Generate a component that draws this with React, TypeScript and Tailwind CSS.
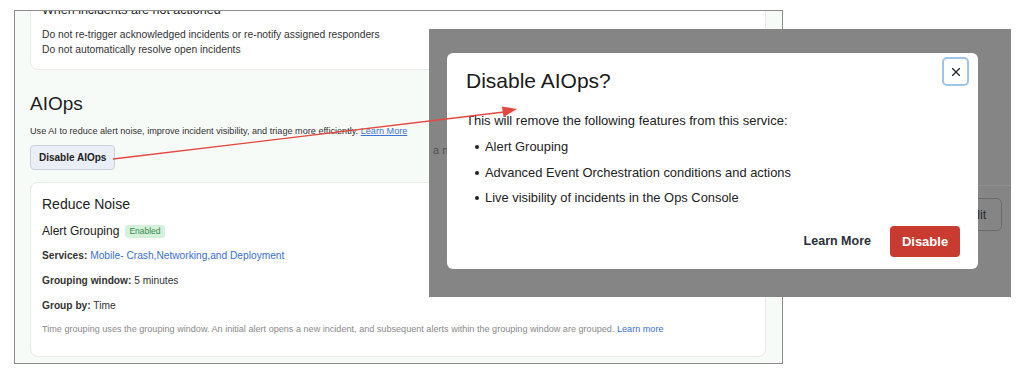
import { X } from 'lucide-react';

const FONT = { fontFamily: '"Liberation Sans", Arial, sans-serif' };

function BackgroundPage() {
  return (
    <div className="ml-[14px] mt-[9px] w-[769px] h-[354px] border-[1.5px] border-[#8c8c8c] bg-[#f7fbf8] overflow-hidden pl-[15px] pr-[16px]">
      <div className="-mt-[24px] bg-white border border-[#e6ebe7] rounded-lg pl-[11px] pt-[14px] pb-[12px]">
        <div className="text-[12.5px] leading-[16px] text-[#222]">When incidents are not actioned</div>
        <div className="mt-[9px] text-[10.3px] leading-[15px] text-[#333]">
          <div>Do not re-trigger acknowledged incidents or re-notify assigned responders</div>
          <div>Do not automatically resolve open incidents</div>
        </div>
      </div>

      <h2 className="mt-[22px] text-[19px] leading-[24px] text-[#1d1d1d]">AIOps</h2>
      <p className="mt-[9px] text-[9.15px] leading-[12px] text-[#333]">
        Use AI to reduce alert noise, improve incident visibility, and triage more efficiently.{' '}
        <span className="text-[#3f73d6] underline">Learn More</span>
      </p>
      <button className="mt-[8px] h-[25px] px-[8px] rounded-[4px] border border-[#c9d1dc] bg-[#eaeef6] text-[10px] font-bold text-[#222]">
        Disable AIOps
      </button>

      <div className="mt-[12px] bg-white border border-[#e6ebe7] rounded-lg pl-[11px] pt-[11px] h-[175px]">
        <div className="text-[14px] leading-[20px] text-[#222]">Reduce Noise</div>
        <div className="mt-[9px] flex items-center gap-[6px]">
          <span className="text-[12px] leading-[16px] text-[#222]">Alert Grouping</span>
          <span className="px-[4px] h-[13px] leading-[13px] rounded-[3px] bg-[#d4f1da] text-[#3b8750] text-[8.5px]">Enabled</span>
        </div>
        <div className="mt-[9px] text-[10.2px] leading-[16px] text-[#333]">
          <span className="font-bold">Services:</span>{' '}
          <span className="text-[#3a6fd8]">Mobile- Crash,Networking,and Deployment</span>
        </div>
        <div className="mt-[9px] text-[10.2px] leading-[16px] text-[#333]">
          <span className="font-bold">Grouping window:</span> 5 minutes
        </div>
        <div className="mt-[9px] text-[10.2px] leading-[16px] text-[#333]">
          <span className="font-bold">Group by:</span> Time
        </div>
        <div className="mt-[9px] text-[9.1px] leading-[12px] text-[#8a8a8a]">
          Time grouping uses the grouping window. An initial alert opens a new incident, and subsequent alerts within the grouping window are grouped.{' '}
          <span className="text-[#3a6fd8]">Learn more</span>
        </div>
      </div>
    </div>
  );
}

function Modal() {
  const features = [
    'Alert Grouping',
    'Advanced Event Orchestration conditions and actions',
    'Live visibility of incidents in the Ops Console',
  ];
  return (
    <div className="relative w-[531px] h-[216px] bg-white rounded-[6px] pl-[19px] pr-[18px] pt-[14px]">
      <button className="absolute right-[9px] top-[4px] w-[27px] h-[29px] flex items-center justify-center rounded-[5px] border-2 border-[#9ec4ee] text-[#222]">
        <X size={14} strokeWidth={2} />
      </button>
      <h3 className="text-[21px] leading-[28px] text-[#1a1a1a]">Disable AIOps?</h3>
      <p className="mt-[18px] text-[13px] leading-[16px] text-[#222]">This will remove the following features from this service:</p>
      <ul className="mt-[10px] flex flex-col gap-[9.5px] pl-[9px]">
        {features.map((f) => (
          <li key={f} className="flex items-center gap-[6px] text-[12.9px] leading-[16px] text-[#222]">
            <span className="w-[4px] h-[4px] rounded-full bg-[#222]" />
            {f}
          </li>
        ))}
      </ul>
      <div className="mt-[20px] flex items-center justify-end gap-[19px]">
        <span className="text-[12.5px] font-bold text-[#2a2f3a]">Learn More</span>
        <button className="w-[70px] h-[31px] rounded-[4px] bg-[#c93a31] text-white text-[13px] font-bold">Disable</button>
      </div>
    </div>
  );
}

function Overlay() {
  return (
    <div className="absolute left-[429px] top-[29px] w-[582px] h-[268px] bg-[#858585] overflow-hidden pl-[18px] pt-[24px]">
      <span className="absolute left-[4px] top-[113px] text-[11px] text-[#505050]">a new</span>
      <div className="absolute left-[549px] top-[156px] w-[40px] h-px bg-[#8f8f8f]" />
      <div className="absolute left-[520px] top-[169px] w-[53px] h-[33px] rounded-[5px] border border-[#6a6a6a] pl-[14px] flex items-center text-[13px] text-[#2e2e2e]">
        Edit
      </div>
      <Modal />
    </div>
  );
}

function Arrow() {
  return (
    <svg className="absolute left-0 top-0 pointer-events-none" width="1024" height="373">
      <line x1="113" y1="159" x2="504" y2="112" stroke="#e4473d" strokeWidth="1.3" />
      <polygon points="517,109 502,106.5 503.5,117" fill="#e4473d" />
    </svg>
  );
}

export default function App() {
  return (
    <div className="relative w-[1024px] h-[373px] bg-white overflow-hidden pt-px" style={FONT}>
      <BackgroundPage />
      <Overlay />
      <Arrow />
    </div>
  );
}
